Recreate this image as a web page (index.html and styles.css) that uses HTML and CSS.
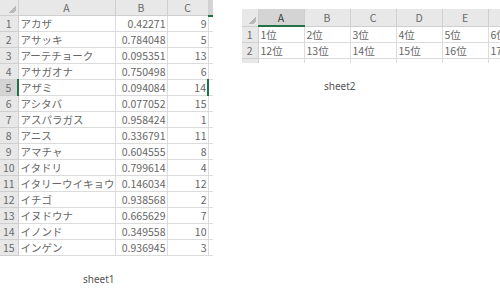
FILE: index.html
```html
<!DOCTYPE html>
<html>
<head>
<meta charset="utf-8">
<link rel="stylesheet" href="styles.css">
</head>
<body>
<div class="page">
  <div class="block b1">
    <table class="sheet s1">
      <colgroup><col class="c-rh1"><col class="c-a1"><col class="c-b1"><col class="c-c1"><col class="c-d1"></colgroup>
      <tr class="hdr"><th class="corner"></th><th>A</th><th>B</th><th class="hl-right">C</th><th class="sel-col"></th></tr>
      <tr><th>1</th><td>アカザ</td><td class="num">0.42271</td><td class="num">9</td><td></td></tr>
      <tr><th>2</th><td>アサッキ</td><td class="num">0.784048</td><td class="num">5</td><td></td></tr>
      <tr><th>3</th><td>アーテチョーク</td><td class="num">0.095351</td><td class="num">13</td><td></td></tr>
      <tr><th>4</th><td>アサガオナ</td><td class="num">0.750498</td><td class="num">6</td><td></td></tr>
      <tr><th class="sel-row">5</th><td>アザミ</td><td class="num">0.094084</td><td class="num">14</td><td class="sel-cell"></td></tr>
      <tr><th>6</th><td>アシタバ</td><td class="num">0.077052</td><td class="num">15</td><td></td></tr>
      <tr><th>7</th><td>アスパラガス</td><td class="num">0.958424</td><td class="num">1</td><td></td></tr>
      <tr><th>8</th><td>アニス</td><td class="num">0.336791</td><td class="num">11</td><td></td></tr>
      <tr><th>9</th><td>アマチャ</td><td class="num">0.604555</td><td class="num">8</td><td></td></tr>
      <tr><th>10</th><td>イタドリ</td><td class="num">0.799614</td><td class="num">4</td><td></td></tr>
      <tr><th>11</th><td>イタリーウイキョウ</td><td class="num">0.146034</td><td class="num">12</td><td></td></tr>
      <tr><th>12</th><td>イチゴ</td><td class="num">0.938568</td><td class="num">2</td><td></td></tr>
      <tr><th>13</th><td>イヌドウナ</td><td class="num">0.665629</td><td class="num">7</td><td></td></tr>
      <tr><th>14</th><td>イノンド</td><td class="num">0.349558</td><td class="num">10</td><td></td></tr>
      <tr><th>15</th><td>インゲン</td><td class="num">0.936945</td><td class="num">3</td><td></td></tr>
    </table>
    <div class="label l1">sheet1</div>
  </div>
  <div class="block b2">
    <table class="sheet s2">
      <colgroup><col class="c-rh2"><col class="c-x"><col class="c-x"><col class="c-x"><col class="c-x"><col class="c-x"><col class="c-x"></colgroup>
      <tr class="hdr"><th class="corner"></th><th class="sel-col">A</th><th>B</th><th>C</th><th>D</th><th>E</th><th>F</th></tr>
      <tr><th>1</th><td>1位</td><td>2位</td><td>3位</td><td>4位</td><td>5位</td><td>6位</td></tr>
      <tr><th>2</th><td>12位</td><td>13位</td><td>14位</td><td>15位</td><td>16位</td><td>17位</td></tr>
      <tr class="stub"><th></th><td></td><td></td><td></td><td></td><td></td><td></td></tr>
    </table>
    <div class="label l2">sheet2</div>
  </div>
</div>
</body>
</html>
```
FILE: styles.css
```css
html, body {
  margin: 0;
  padding: 0;
  background: #ffffff;
  overflow: hidden;
}
.page {
  width: 500px;
  height: 295px;
  display: flex;
  align-items: flex-start;
  overflow: hidden;
  font-family: "Noto Sans CJK JP", "Noto Sans", sans-serif;
  color: #444444;
}
.block {
  display: flex;
  flex-direction: column;
  flex-shrink: 0;
}
.b1 {
  width: 213px;
  overflow: hidden;
}
.b2 {
  margin-left: 29px;
  margin-top: 9px;
  width: 292px;
}
.sheet {
  border-collapse: collapse;
  table-layout: fixed;
  font-size: 10.5px;
}
.s1 { width: 222px; }
.s2 { width: 292px; }
.c-rh1 { width: 18px; }
.c-a1 { width: 97px; }
.c-b1 { width: 52px; }
.c-c1 { width: 41px; }
.c-d1 { width: 14px; }
.c-rh2 { width: 16px; }
.c-x { width: 46px; }

.sheet th, .sheet td {
  height: 15px;
  padding: 0 2px;
  line-height: 15px;
  white-space: nowrap;
  overflow: hidden;
  box-sizing: border-box;
}
.sheet td {
  border: 1px solid #dcdcdc;
  color: #666666;
  text-align: left;
}
.sheet td.num { text-align: right; padding-right: 1px; }
.sheet th {
  background: #e8e8e8;
  border: 1px solid #cfcfcf;
  font-weight: normal;
  color: #6a6a6a;
  text-align: center;
}
.sheet tr th:first-child {
  text-align: center;
  padding: 0;
}
.s1 tr.hdr th { height: 15px; }
.s2 tr.hdr th { height: 17px; }
.s2 tr.stub th, .s2 tr.stub td { height: 4px; border-bottom: none; background: #fff; }
.s2 tr.stub th { background: #e8e8e8; border-bottom: none; }
.sheet tr.hdr th { border-top: none; }
.sheet th.corner {
  border-left: none;
  background: #e8e8e8 linear-gradient(135deg, transparent 62%, #b9b9b9 62%, #b9b9b9 88%, transparent 88%);
  background-size: 10px 10px;
  background-repeat: no-repeat;
  background-position: right 2px bottom 2px;
}
.sheet tr th:first-child { border-left: none; }
.sheet th.sel-col {
  background: #d4d4d4;
  border-bottom: 2px solid #217346;
  color: #3a3a3a;
}
.sheet th.sel-row {
  background: #d4d4d4;
  border-right: 2px solid #217346;
}
.sheet td.sel-cell {
  border-left: 2px solid #217346;
}
.label {
  font-family: "Noto Sans", "DejaVu Sans", sans-serif;
  font-size: 10px;
  color: #555555;
}
.l1 {
  margin-top: 16px;
  margin-left: 83px;
}
.l2 {
  margin-top: 16px;
  margin-left: 82px;
}
```
